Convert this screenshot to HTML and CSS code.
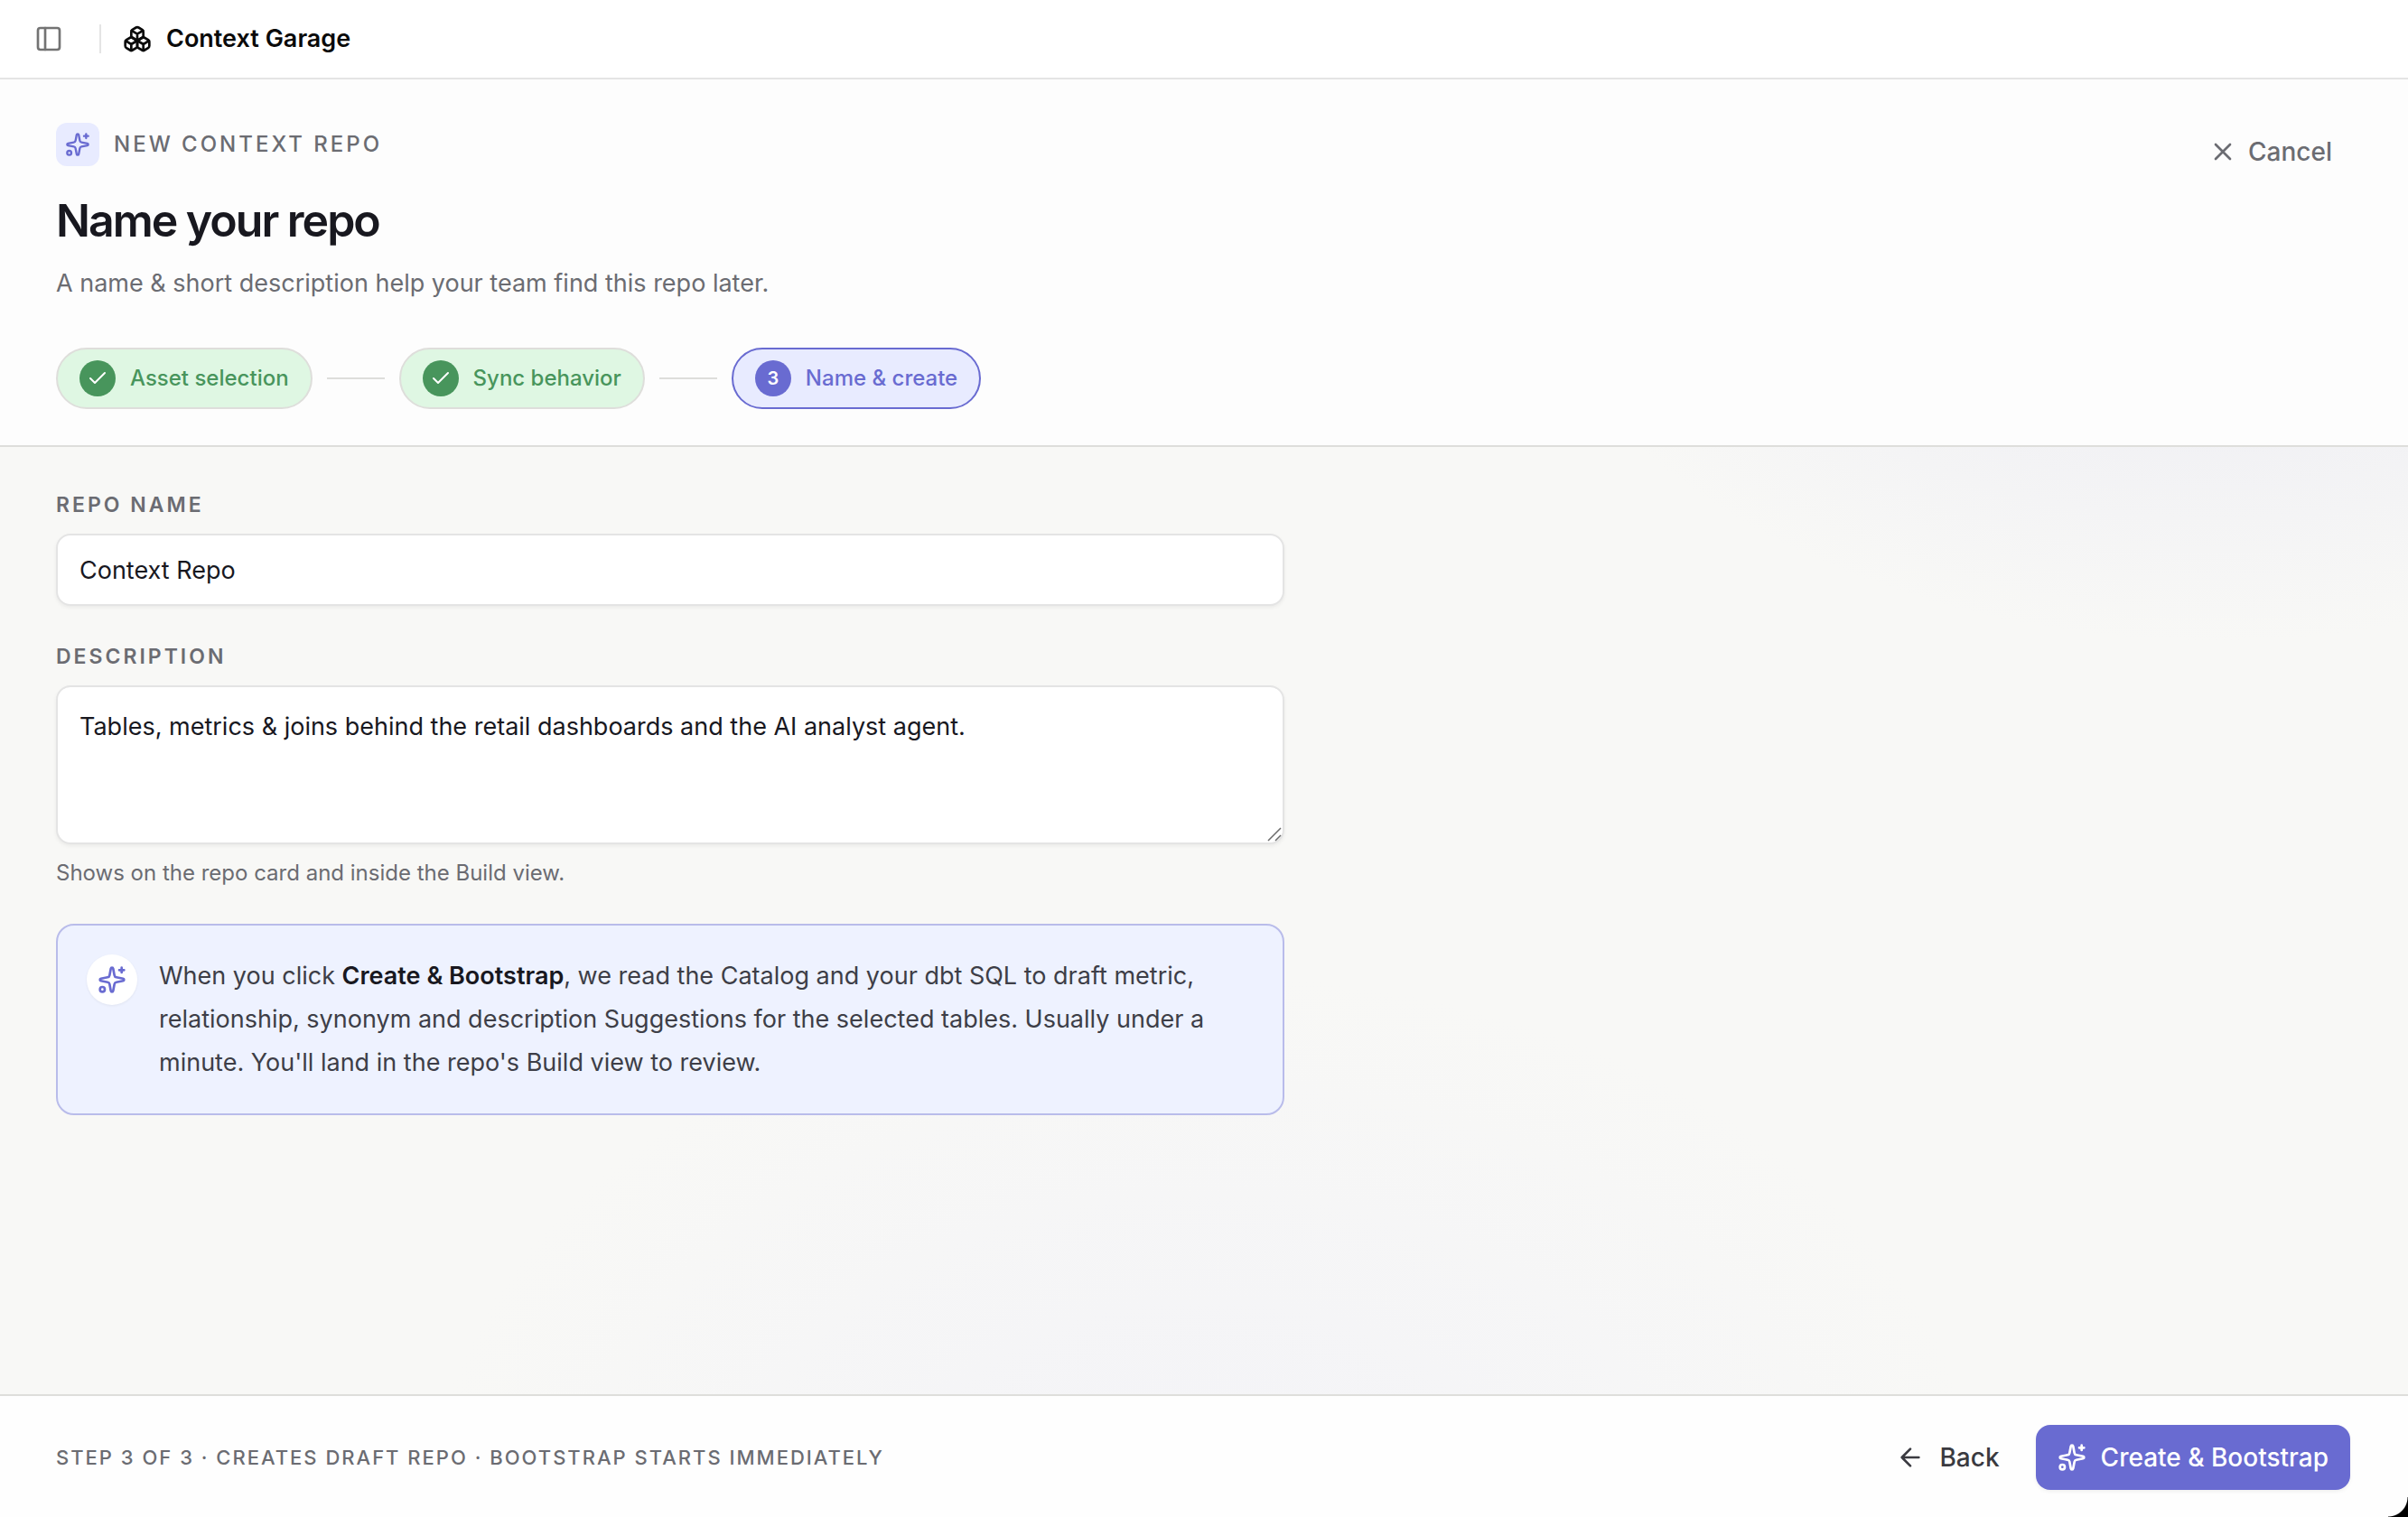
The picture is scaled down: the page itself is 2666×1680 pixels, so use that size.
FILE: index.html
```html
<!DOCTYPE html>
<html lang="en">
<head>
<meta charset="utf-8">
<meta name="viewport" content="width=device-width, initial-scale=1">
<title>Context Garage</title>
<link rel="stylesheet" href="styles.css">
</head>
<body>
<svg class="sprite" aria-hidden="true">
  <symbol id="sparkles" viewBox="0 0 24 24">
    <path d="M11.017 2.814a1 1 0 0 1 1.966 0l1.051 5.558a2 2 0 0 0 1.594 1.594l5.558 1.051a1 1 0 0 1 0 1.966l-5.558 1.051a2 2 0 0 0-1.594 1.594l-1.051 5.558a1 1 0 0 1-1.966 0l-1.051-5.558a2 2 0 0 0-1.594-1.594l-5.558-1.051a1 1 0 0 1 0-1.966l5.558-1.051a2 2 0 0 0 1.594-1.594z"/>
    <path d="M20 2v4M22 4h-4"/>
    <circle cx="4" cy="20" r="2"/>
  </symbol>
  <symbol id="check" viewBox="0 0 24 24"><path d="M20 6 9 17l-5-5"/></symbol>
</svg>

<header class="topbar">
  <button class="icon-button" type="button" aria-label="Toggle sidebar">
    <svg class="icon" viewBox="0 0 24 24"><rect x="3" y="3" width="18" height="18" rx="2"/><path d="M9 3v18"/></svg>
  </button>
  <span class="topbar-divider"></span>
  <div class="brand">
    <svg class="icon" viewBox="0 0 24 24" aria-hidden="true">
      <path d="M2.97 12.92A2 2 0 0 0 2 14.63v3.24a2 2 0 0 0 .97 1.71l3 1.8a2 2 0 0 0 2.06 0L12 19v-5.5l-5-3-4.03 2.42Z"/>
      <path d="m7 16.5-4.74-2.85M7 16.5l5-3M7 16.5v5.17"/>
      <path d="M12 13.5V19l3.97 2.38a2 2 0 0 0 2.06 0l3-1.8a2 2 0 0 0 .97-1.71v-3.24a2 2 0 0 0-.97-1.71L17 10.5l-5 3Z"/>
      <path d="m17 16.5-5-3M17 16.5l4.74-2.85M17 16.5v5.17"/>
      <path d="M7.97 4.42A2 2 0 0 0 7 6.13v4.37l5 3 5-3V6.13a2 2 0 0 0-.97-1.71l-3-1.8a2 2 0 0 0-2.06 0l-3 1.8Z"/>
      <path d="M12 8 7.26 5.15M12 8l4.74-2.85M12 13.5V8"/>
    </svg>
    <span>Context Garage</span>
  </div>
</header>

<section class="page-header">
  <div class="heading-row">
    <div class="heading">
      <div class="eyebrow">
        <span class="eyebrow-badge"><svg class="icon icon-small" aria-hidden="true"><use href="#sparkles"/></svg></span>
        <span class="eyebrow-text">NEW CONTEXT REPO</span>
      </div>
      <h1>Name your repo</h1>
      <p class="subtitle">A name &amp; short description help your team find this repo later.</p>
    </div>
    <button class="button button-quiet" type="button">
      <svg class="icon" viewBox="0 0 24 24" aria-hidden="true"><path d="M18 6 6 18M6 6l12 12"/></svg>
      <span>Cancel</span>
    </button>
  </div>
  <ol class="steps">
    <li class="step step-done"><span class="step-mark"><svg class="icon icon-check" aria-hidden="true"><use href="#check"/></svg></span><span>Asset selection</span></li>
    <li class="step-line" aria-hidden="true"></li>
    <li class="step step-done"><span class="step-mark"><svg class="icon icon-check" aria-hidden="true"><use href="#check"/></svg></span><span>Sync behavior</span></li>
    <li class="step-line" aria-hidden="true"></li>
    <li class="step step-current" aria-current="step"><span class="step-mark">3</span><span>Name &amp; create</span></li>
  </ol>
</section>

<main class="content">
  <form class="form" id="repo-form">
    <div class="field">
      <label for="repo-name">REPO NAME</label>
      <input id="repo-name" type="text" value="Context Repo">
    </div>
    <div class="field">
      <label for="repo-description">DESCRIPTION</label>
      <div class="textarea-wrap">
        <textarea id="repo-description">Tables, metrics &amp; joins behind the retail dashboards and the AI analyst agent.</textarea>
        <svg class="grip" viewBox="0 0 16 16" aria-hidden="true"><path d="M1 15 15 1M9 15l6-6"/></svg>
      </div>
      <p class="hint">Shows on the repo card and inside the Build view.</p>
    </div>
    <aside class="notice">
      <span class="notice-badge"><svg class="icon" aria-hidden="true"><use href="#sparkles"/></svg></span>
      <p>When you click <strong>Create &amp; Bootstrap</strong>, we read the Catalog and your dbt SQL to draft metric, relationship, synonym and description Suggestions for the selected tables. Usually under a minute. You'll land in the repo's Build view to review.</p>
    </aside>
  </form>
</main>

<footer class="footer">
  <span class="footer-status">STEP 3 OF 3 · CREATES DRAFT REPO · BOOTSTRAP STARTS IMMEDIATELY</span>
  <div class="footer-actions">
    <button class="button button-back" type="button">
      <svg class="icon" viewBox="0 0 24 24" aria-hidden="true"><path d="m12 19-7-7 7-7M19 12H5"/></svg>
      <span>Back</span>
    </button>
    <button class="button button-primary" type="submit" form="repo-form">
      <svg class="icon" aria-hidden="true"><use href="#sparkles"/></svg>
      <span>Create &amp; Bootstrap</span>
    </button>
  </div>
</footer>
</body>
</html>
```
FILE: styles.css
```css
:root {
  --ink: #18181f;
  --muted: #6b6c72;
  --line: #dededb;
  --accent: #696bd1;
  --accent-soft: #e8ebff;
  --green: #48955c;
  --gutter: 62px;
}

* { box-sizing: border-box; }

body {
  margin: 0;
  min-height: 100vh;
  display: flex;
  flex-direction: column;
  position: relative;
  font-family: Inter, "Liberation Sans", sans-serif;
  font-size: 27px;
  line-height: 40px;
  color: var(--ink);
  background: #f8f8f6;
}

/* rounded lower corner of the app window */
body::after {
  content: "";
  position: absolute;
  right: 0;
  bottom: 0;
  width: 22px;
  height: 22px;
  background: radial-gradient(circle at 0 0, transparent 21px, #000 22px);
}

h1, p, ol { margin: 0; padding: 0; }

button, input, textarea { font: inherit; color: inherit; }

.sprite { display: none; }

.icon {
  width: 32px;
  height: 32px;
  flex: none;
  fill: none;
  stroke: currentColor;
  stroke-width: 2;
  stroke-linecap: round;
  stroke-linejoin: round;
}
.icon-small { width: 28px; height: 28px; }
.icon-check { width: 24px; height: 24px; }

.topbar {
  display: flex;
  align-items: center;
  height: 88px;
  padding: 0 24px;
  background: #fff;
  border-bottom: 2px solid #e4e4e4;
}
.icon-button {
  display: flex;
  padding: 14px;
  border: 0;
  background: none;
  color: #737373;
}
.topbar-divider {
  width: 2px;
  height: 32px;
  margin: 0 24px 0 26px;
  background: #e4e4e4;
}
.brand {
  display: flex;
  align-items: center;
  gap: 16px;
  font-weight: 600;
  color: #0a0a0a;
}

.page-header {
  padding: 48px var(--gutter) 40px;
  border-bottom: 2px solid var(--line);
  background: #fdfdfd;
}
.heading-row {
  display: flex;
  justify-content: space-between;
  align-items: flex-start;
}
.eyebrow { display: flex; align-items: center; gap: 16px; }
.eyebrow-badge {
  display: grid;
  place-items: center;
  width: 48px;
  height: 48px;
  border-radius: 12px;
  background: var(--accent-soft);
  color: var(--accent);
}
.eyebrow-text {
  font-size: 24px;
  font-weight: 500;
  letter-spacing: 3px;
  color: var(--muted);
}
h1 {
  margin-top: 28px;
  font-size: 50px;
  font-weight: 600;
  line-height: 64px;
  letter-spacing: -2px;
}
.subtitle { margin-top: 18px; color: var(--muted); }

.steps {
  display: flex;
  align-items: center;
  gap: 16px;
  margin-top: 51px;
  list-style: none;
}
.step {
  display: flex;
  align-items: center;
  gap: 16px;
  height: 68px;
  padding: 0 24px;
  border: 2px solid var(--line);
  border-radius: 34px;
  font-size: 24px;
  font-weight: 500;
}
.step-done { background: #dff7e3; color: var(--green); }
.step-current {
  background: var(--accent-soft);
  border-color: var(--accent);
  color: var(--accent);
}
.step-mark {
  display: grid;
  place-items: center;
  width: 40px;
  height: 40px;
  border-radius: 50%;
  background: var(--green);
  color: #fff;
  font-size: 20px;
  font-weight: 600;
}
.step-current .step-mark { background: var(--accent); }
.step-line { width: 64px; height: 2px; background: var(--line); }

.content {
  flex: 1;
  padding: 44px var(--gutter);
  background:
    radial-gradient(ellipse 800px 540px at 92% -325px, #e8e8f2 0, transparent 100%),
    radial-gradient(ellipse 860px 600px at 50% calc(100% + 136px), #f3f3f7 0, transparent 100%);
}
.form {
  display: flex;
  flex-direction: column;
  gap: 36px;
  max-width: 1360px;
}
.field { display: flex; flex-direction: column; }
.field label {
  margin-bottom: 12px;
  font-size: 23px;
  font-weight: 600;
  letter-spacing: 3px;
  color: var(--muted);
}
input, textarea {
  display: block;
  width: 100%;
  padding: 0 24px;
  border: 2px solid #e4e4e4;
  border-radius: 16px;
  outline: 0;
  background: #fff;
  box-shadow: 0 2px 4px rgb(0 0 0 / 6%);
}
input { height: 80px; }
textarea {
  height: 176px;
  padding-top: 22px;
  line-height: 44px;
  resize: none;
}
.textarea-wrap { position: relative; }
.grip {
  position: absolute;
  right: 3px;
  bottom: 3px;
  width: 16px;
  height: 16px;
  fill: none;
  stroke: #6a6a6a;
  stroke-width: 1.5;
}
.hint {
  margin-top: 12px;
  font-size: 24px;
  color: var(--muted);
}
.notice {
  display: flex;
  align-items: flex-start;
  gap: 24px;
  padding: 32px;
  border: 2px solid #b9bcea;
  border-radius: 20px;
  background: #eef2ff;
  line-height: 48px;
  color: #3d3e47;
}
.notice strong { font-weight: 600; color: var(--ink); }
.notice-badge {
  display: grid;
  place-items: center;
  flex: none;
  width: 56px;
  height: 56px;
  border-radius: 50%;
  background: #fff;
  color: var(--accent);
  box-shadow: 0 1px 3px rgb(0 0 0 / 6%);
}

.footer {
  display: flex;
  align-items: center;
  justify-content: space-between;
  padding: 32px 64px 30px var(--gutter);
  border-top: 2px solid var(--line);
  background: #fefefe;
}
.footer-status {
  font-size: 22px;
  font-weight: 500;
  letter-spacing: 2px;
  color: var(--muted);
}
.footer-actions { display: flex; gap: 16px; }

.button {
  display: flex;
  align-items: center;
  gap: 16px;
  height: 72px;
  padding: 0 24px;
  border: 0;
  border-radius: 16px;
  background: none;
  font-size: 28px;
  font-weight: 500;
}
.button-quiet { height: 64px; padding: 0 22px; gap: 12px; color: var(--muted); }
.button-back { color: #3a3a40; }
.button-primary {
  background: var(--accent);
  color: #fff;
  box-shadow: 0 2px 4px rgb(0 0 0 / 6%);
}
```
